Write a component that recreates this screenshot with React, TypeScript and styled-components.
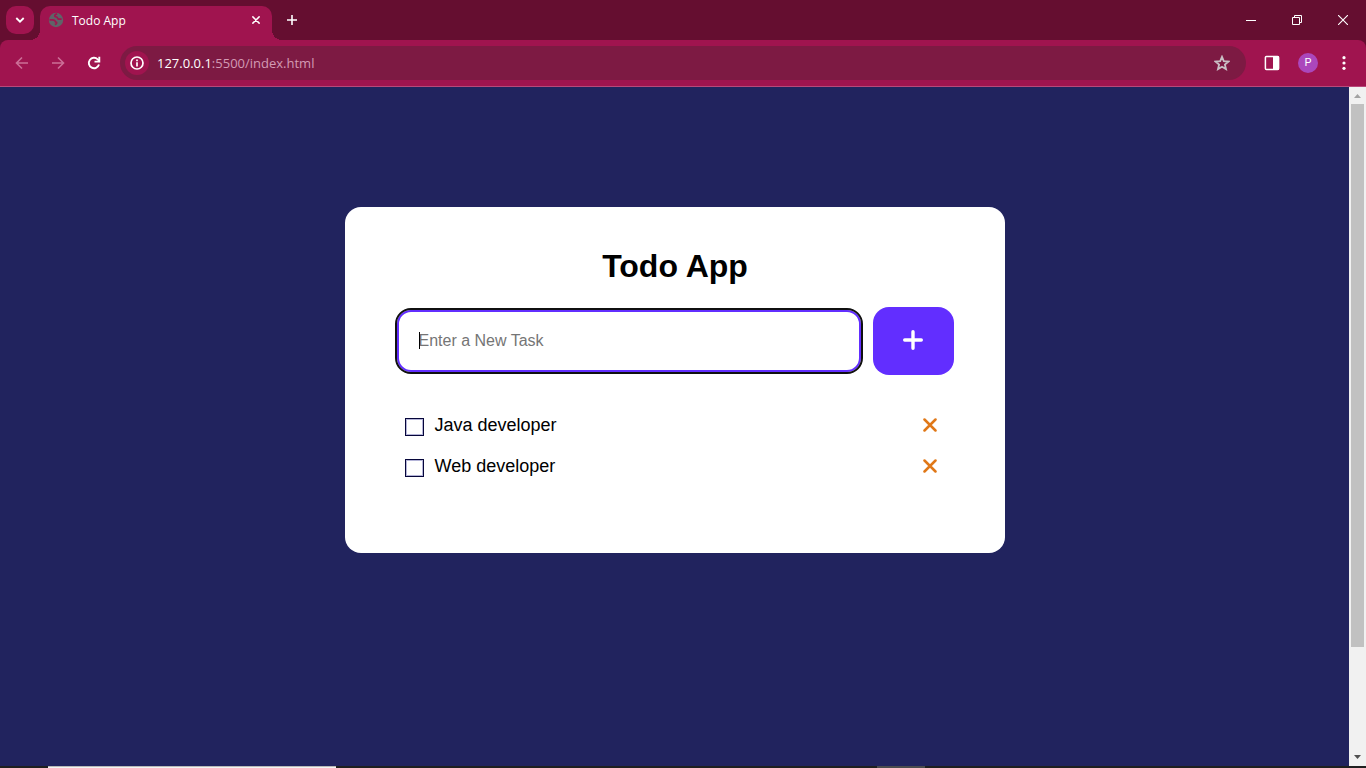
import React, { useState } from "react";
import styled, { createGlobalStyle } from "styled-components";

const GlobalStyle = createGlobalStyle`
  *, *::before, *::after { box-sizing: border-box; }
  body { margin: 0; font-family: "Liberation Sans", Arial, sans-serif; }
  button { font: inherit; border: 0; padding: 0; background: none; cursor: pointer; }
`;

const color = {
  frame: "#650e30",
  toolbar: "#a0144f",
  omnibox: "#7d1a43",
  page: "#21235e",
  accent: "#622eff",
  remove: "#e07818",
};

const Window = styled.div`
  display: flex;
  flex-direction: column;
  min-height: 100vh;
  background: ${color.page};
`;

const TabStrip = styled.header`
  display: flex;
  align-items: flex-end;
  height: 40px;
  padding-left: 6px;
  background: ${color.frame};
  color: #fff;
`;

const IconButton = styled.button<{ $w?: number; $h?: number; $dim?: boolean }>`
  display: flex;
  align-items: center;
  justify-content: center;
  flex: none;
  width: ${(p) => p.$w ?? 36}px;
  height: ${(p) => p.$h ?? 34}px;
  color: ${(p) => (p.$dim ? "#cb6f97" : "#fff")};
`;

const TabSearch = styled(IconButton)`
  align-self: center;
  border-radius: 10px;
  background: ${color.toolbar};
`;

const Tab = styled.div`
  position: relative;
  display: flex;
  align-items: center;
  width: 232px;
  height: 34px;
  margin-left: 6px;
  padding: 0 6px 6px 8px;
  border-radius: 10px 10px 0 0;
  background: ${color.toolbar};
  &::before, &::after {
    content: "";
    position: absolute;
    bottom: 0;
    width: 10px;
    height: 10px;
  }
  &::before {
    right: 100%;
    background: radial-gradient(circle at 0 0, transparent 10px, ${color.toolbar} 10px);
  }
  &::after {
    left: 100%;
    background: radial-gradient(circle at 100% 0, transparent 10px, ${color.toolbar} 10px);
  }
`;

const TabTitle = styled.span`
  flex: 1;
  margin-left: 8px;
  padding-top: 2px;
  font: 12px/20px "Open Sans", "Noto Sans", sans-serif;
`;

const WindowControls = styled.div`
  display: flex;
  margin-left: auto;
`;

const ToolbarFrame = styled.div`
  background: ${color.frame};
`;

const Toolbar = styled.nav`
  display: flex;
  align-items: center;
  height: 47px;
  padding: 0 4px;
  border-bottom: 1px solid #b8487a;
  border-radius: 8px 8px 0 0;
  background: ${color.toolbar};
`;

const Omnibox = styled.div`
  display: flex;
  flex: 1;
  align-items: center;
  height: 34px;
  margin: 0 8px;
  padding: 0 6px 0 5px;
  border-radius: 17px;
  background: ${color.omnibox};
  color: #d39bb4;
  font: 13px/20px "Open Sans", "Noto Sans", sans-serif;
`;

const SiteInfo = styled(IconButton)`
  margin-right: 8px;
  border-radius: 50%;
  background: ${color.toolbar};
`;

const Address = styled.span`
  flex: 1;
`;

const Host = styled.span`
  color: #fff;
`;

const Avatar = styled.span`
  width: 20px;
  height: 20px;
  border-radius: 50%;
  background: #ab47bc;
  color: #fff;
  font: 11px/20px Roboto, sans-serif;
  text-align: center;
`;

const Viewport = styled.div`
  display: flex;
  flex: 1;
`;

const Main = styled.main`
  flex: 1;
  padding: 120px 20px;
`;

const Card = styled.section`
  max-width: 660px;
  min-height: 346px;
  margin: 0 auto;
  padding: 40px 51px 40px 52px;
  border-radius: 16px;
  background: #fff;
`;

const Title = styled.h1`
  margin: 0 0 22px;
  font-size: 32px;
  line-height: 38px;
  text-align: center;
`;

const Form = styled.form`
  display: flex;
  align-items: center;
  gap: 12px;
`;

const Field = styled.div`
  position: relative;
  flex: 1;
`;

const TaskInput = styled.input`
  display: block;
  width: 100%;
  height: 62px;
  padding: 0 20px;
  border: 2px solid ${color.accent};
  outline: 2px solid #101010;
  border-radius: 14px;
  background: #fff;
  font: 16px/20px "Liberation Sans", Arial, sans-serif;
  &::placeholder { color: #757575; opacity: 1; }
`;

const Caret = styled.span`
  position: absolute;
  top: 22px;
  left: 22px;
  width: 1px;
  height: 17px;
  background: #000;
`;

const AddButton = styled.button`
  display: flex;
  align-items: center;
  justify-content: center;
  width: 81px;
  height: 68px;
  padding-bottom: 2px;
  border-radius: 16px;
  background: ${color.accent};
  color: #fff;
`;

const TaskList = styled.ul`
  margin: 29px 0 0;
  padding: 0;
  list-style: none;
`;

const TaskRow = styled.li`
  display: flex;
  align-items: center;
  height: 41px;
  padding: 0 14px 0 8px;
`;

const TaskLabel = styled.label`
  display: flex;
  flex: 1;
  align-items: center;
  gap: 11px;
  font-size: 18px;
  line-height: 22px;
`;

const Checkbox = styled.input`
  appearance: none;
  width: 19px;
  height: 18px;
  margin: 4px 0 0;
  border: 1px solid #06063a;
  box-shadow: inset 0 0 0 1px #b4b4d8;
  background: #fff;
  &:checked { background: ${color.accent}; }
`;

const RemoveButton = styled(IconButton)`
  color: ${color.remove};
`;

const ScrollTrack = styled.aside`
  display: flex;
  flex-direction: column;
  align-items: center;
  width: 17px;
  background: #f1f1f1;
`;

const ScrollThumb = styled.div`
  flex: 543;
  width: 13px;
  background: #c1c1c1;
`;

const ScrollSpace = styled.div`
  flex: 102;
`;

const Taskbar = styled.footer`
  display: flex;
  height: 2px;
  padding-left: 48px;
  background: #1f1f1f;
`;

const TaskbarSearch = styled.div`
  width: 288px;
  border-top: 1px solid #b8b8b8;
  background: #f3f3f3;
`;

const TaskbarApp = styled.div`
  width: 48px;
  margin-left: 541px;
  background: #4b4b4e;
`;

const Cross = ({ size, weight }: { size: number; weight: number }) => (
  <svg width={size} height={size} viewBox="0 0 14 14" fill="none" stroke="currentColor" strokeWidth={weight} strokeLinecap="round">
    <path d="M1.5 1.5l11 11M12.5 1.5l-11 11" />
  </svg>
);

const Arrow = ({ flip }: { flip?: boolean }) => (
  <svg width="16" height="16" viewBox="0 0 16 16" fill="none" stroke="currentColor" strokeWidth="1.6">
    <path d={flip ? "M2 8h11M8 2.5l5.500 5.500L8 13.500" : "M14 8H3M8 2.500L2.500 8L8 13.500"} />
  </svg>
);

const initialTasks = ["Java developer", "Web developer"];

export default function App() {
  const [tasks, setTasks] = useState(initialTasks);
  const [draft, setDraft] = useState("");

  const addTask = (event: React.FormEvent) => {
    event.preventDefault();
    if (!draft.trim()) return;
    setTasks([...tasks, draft.trim()]);
    setDraft("");
  };

  return (
    <Window>
      <GlobalStyle />
      <TabStrip>
        <TabSearch $w={28} $h={28} aria-label="Search tabs">
          <svg width="10" height="10" viewBox="0 0 10 10" fill="none" stroke="currentColor" strokeWidth="1.8">
            <path d="M1.3 3l3.700 3.700L8.700 3" />
          </svg>
        </TabSearch>
        <Tab>
          <svg width="16" height="16" viewBox="0 0 16 16">
            <circle cx="8" cy="8" r="7.2" fill="#5f6368" />
            <path
              d="M9.200 1.900c-1.500.4-2.600 1.300-2.400 2.200.2.900 1.300.6 2.100 1 .8.500.4 1.400 1.300 1.800.9.400 2 .2 3.400.2M1.500 7.800h3c1.500 0 2.700.7 2.700 1.700 0 .8 1.400.5 1.500 1.400.1.900-1 1.200-1.700 1.800"
              fill="none"
              stroke={color.toolbar}
              strokeWidth="1.7"
            />
          </svg>
          <TabTitle>Todo App</TabTitle>
          <IconButton $w={20} $h={20} aria-label="Close tab"><Cross size={8} weight={2.6} /></IconButton>
        </Tab>
        <IconButton $w={40} $h={40} aria-label="New tab">
          <svg width="12" height="12" viewBox="0 0 12 12" stroke="currentColor" strokeWidth="1.6">
            <path d="M6 1v10M1 6h10" />
          </svg>
        </IconButton>
        <WindowControls>
          <IconButton $w={46} $h={40} aria-label="Minimize">
            <svg width="10" height="10" viewBox="0 0 10 10"><path d="M0 5h10v1H0z" fill="currentColor" /></svg>
          </IconButton>
          <IconButton $w={46} $h={40} aria-label="Restore">
            <svg width="10" height="10" viewBox="0 0 10 10" fill="none" stroke="currentColor">
              <path d="M.5 2.500h7v7h-7zM2.500 2.500v-2h7v7h-2" />
            </svg>
          </IconButton>
          <IconButton $w={46} $h={40} aria-label="Close window">
            <svg width="10" height="10" viewBox="0 0 10 10" stroke="currentColor" strokeWidth="1.1">
              <path d="M0 0l10 10M10 0L0 10" />
            </svg>
          </IconButton>
        </WindowControls>
      </TabStrip>

      <ToolbarFrame>
        <Toolbar>
          <IconButton $dim aria-label="Back"><Arrow /></IconButton>
          <IconButton $dim aria-label="Forward"><Arrow flip /></IconButton>
          <IconButton aria-label="Reload">
            <svg width="16" height="16" viewBox="0 0 16 16" fill="none" stroke="currentColor" strokeWidth="1.9">
              <path d="M13 9.500A5.200 5.200 0 1 1 11.700 4.300L13.200 5.800" />
              <path d="M13.300 1.800v4.800H8.500" />
            </svg>
          </IconButton>
          <Omnibox>
            <SiteInfo $w={24} $h={24} aria-label="Site information">
              <svg width="14" height="14" viewBox="0 0 14 14" fill="none" stroke="currentColor" strokeWidth="1.7">
                <circle cx="7" cy="7" r="6" />
                <path d="M7 6.200v4.300M7 3.500v1.700" />
              </svg>
            </SiteInfo>
            <Address><Host>127.0.0.1</Host>:5500/index.html</Address>
            <IconButton aria-label="Bookmark this page">
              <svg width="16" height="16" viewBox="0 0 16 16" fill="none" stroke="#c9bfc4" strokeWidth="1.8">
                <path d="M8 1.800l1.800 4.300 4.700.4-3.600 3 1.100 4.600L8 11.700l-4 2.400 1.100-4.600-3.600-3 4.700-.4z" />
              </svg>
            </IconButton>
          </Omnibox>
          <IconButton aria-label="Side panel">
            <svg width="16" height="16" viewBox="0 0 16 16">
              <rect x="1.400" y="1.400" width="13.200" height="13.200" rx="1" fill="none" stroke="currentColor" strokeWidth="1.5" />
              <path d="M9 1h5q1 0 1 1v12q0 1-1 1H9z" fill="currentColor" />
            </svg>
          </IconButton>
          <IconButton aria-label="Profile"><Avatar>P</Avatar></IconButton>
          <IconButton aria-label="Browser menu">
            <svg width="16" height="16" viewBox="0 0 16 16" fill="currentColor">
              <circle cx="8" cy="2.700" r="1.600" />
              <circle cx="8" cy="8" r="1.600" />
              <circle cx="8" cy="13.300" r="1.600" />
            </svg>
          </IconButton>
        </Toolbar>
      </ToolbarFrame>

      <Viewport>
        <Main>
          <Card>
            <Title>Todo App</Title>
            <Form onSubmit={addTask}>
              <Field>
                <TaskInput
                  aria-label="New task"
                  placeholder="Enter a New Task"
                  value={draft}
                  onChange={(event) => setDraft(event.target.value)}
                />
                {draft === "" && <Caret />}
              </Field>
              <AddButton type="submit" aria-label="Add task">
                <svg width="20" height="20" viewBox="0 0 20 20" stroke="currentColor" strokeWidth="3.4" strokeLinecap="round">
                  <path d="M10 1.700v16.600M1.700 10h16.600" />
                </svg>
              </AddButton>
            </Form>
            <TaskList>
              {tasks.map((task) => (
                <TaskRow key={task}>
                  <TaskLabel>
                    <Checkbox type="checkbox" />
                    {task}
                  </TaskLabel>
                  <RemoveButton
                    $w={20}
                    $h={20}
                    aria-label={`Remove ${task}`}
                    onClick={() => setTasks(tasks.filter((item) => item !== task))}
                  >
                    <Cross size={14} weight={2.5} />
                  </RemoveButton>
                </TaskRow>
              ))}
            </TaskList>
          </Card>
        </Main>
        <ScrollTrack>
          <svg width="17" height="17" viewBox="0 0 17 17"><path d="M5 11l3.500-4 3.500 4z" fill="#a3a3a3" /></svg>
          <ScrollThumb />
          <ScrollSpace />
          <svg width="17" height="17" viewBox="0 0 17 17"><path d="M5 6l3.500 4L12 6z" fill="#505050" /></svg>
        </ScrollTrack>
      </Viewport>
      <Taskbar>
        <TaskbarSearch />
        <TaskbarApp />
      </Taskbar>
    </Window>
  );
}
